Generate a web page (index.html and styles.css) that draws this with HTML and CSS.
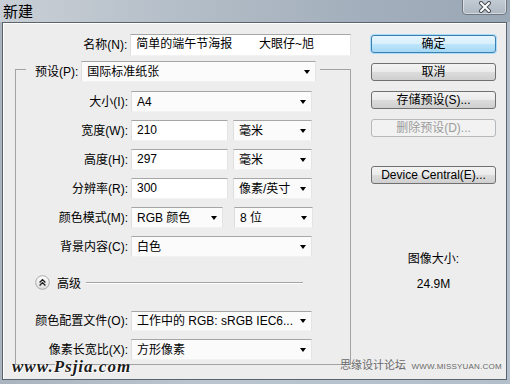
FILE: index.html
```html
<!DOCTYPE html>
<html lang="zh-CN">
<head>
<meta charset="utf-8">
<title>新建</title>
<link rel="stylesheet" href="styles.css">
</head>
<body>
<div class="window">
  <div class="titlebar">
    <span class="title">新建</span>
    <div class="close">
      <svg width="16" height="12" viewBox="0 0 16 12"><path d="M4 2 L12 10 M12 2 L4 10" stroke="#4a4f55" stroke-width="4" stroke-linecap="round"/><path d="M4 2 L12 10 M12 2 L4 10" stroke="#ffffff" stroke-width="2" stroke-linecap="round"/></svg>
    </div>
  </div>
  <div class="frame">
    <div class="form">
      <div class="row name-row">
        <span class="lbl main-lbl">名称(N):</span>
        <div class="field text w-name">简单的端午节海报        大眼仔~旭</div>
      </div>
      <fieldset class="group">
        <legend class="legend">
          <span class="lbl">预设(P):</span>
          <div class="field select w-preset"><span>国际标准纸张</span><i class="arrow"></i></div>
        </legend>
        <div class="row first">
          <span class="lbl grp-lbl">大小(I):</span>
          <div class="field select w-full"><span>A4</span><i class="arrow"></i></div>
        </div>
        <div class="row">
          <span class="lbl grp-lbl">宽度(W):</span>
          <div class="field text w-num">210</div>
          <div class="field select w-unit gap5"><span>毫米</span><i class="arrow"></i></div>
        </div>
        <div class="row">
          <span class="lbl grp-lbl">高度(H):</span>
          <div class="field text w-num">297</div>
          <div class="field select w-unit gap5"><span>毫米</span><i class="arrow"></i></div>
        </div>
        <div class="row">
          <span class="lbl grp-lbl">分辨率(R):</span>
          <div class="field text w-num">300</div>
          <div class="field select w-unit gap5"><span>像素/英寸</span><i class="arrow"></i></div>
        </div>
        <div class="row">
          <span class="lbl grp-lbl">颜色模式(M):</span>
          <div class="field select w-mode"><span>RGB 颜色</span><i class="arrow"></i></div>
          <div class="field select w-unit gap11"><span>8 位</span><i class="arrow"></i></div>
        </div>
        <div class="row">
          <span class="lbl grp-lbl">背景内容(C):</span>
          <div class="field select w-full"><span>白色</span><i class="arrow"></i></div>
        </div>
        <div class="adv-row">
          <svg class="adv-icon" width="15" height="15" viewBox="0 0 15 15">
            <defs><linearGradient id="cg" x1="0" y1="0" x2="0" y2="1"><stop offset="0" stop-color="#ffffff"/><stop offset="1" stop-color="#dcdcdc"/></linearGradient></defs>
            <circle cx="7.5" cy="7.5" r="6.8" fill="url(#cg)" stroke="#a8a8a8"/>
            <path d="M4.6 7.4 L7.5 4.6 L10.4 7.4 M4.6 10.4 L7.5 7.6 L10.4 10.4" fill="none" stroke="#1e1e1e" stroke-width="1.4"/>
          </svg>
          <span class="adv-lbl">高级</span>
          <span class="adv-line"></span>
        </div>
        <div class="row profile">
          <span class="lbl grp-lbl">颜色配置文件(O):</span>
          <div class="field select w-full"><span>工作中的 RGB: sRGB IEC6...</span><i class="arrow"></i></div>
        </div>
        <div class="row">
          <span class="lbl grp-lbl">像素长宽比(X):</span>
          <div class="field select w-full"><span>方形像素</span><i class="arrow"></i></div>
        </div>
      </fieldset>
    </div>
    <div class="side">
      <div class="btn primary">确定</div>
      <div class="btn">取消</div>
      <div class="btn">存储预设(S)...</div>
      <div class="btn disabled">删除预设(D)...</div>
      <div class="btn device">Device Central(E)...</div>
      <div class="size-title">图像大小:</div>
      <div class="size-val">24.9M</div>
    </div>
  </div>
  <div class="wm-left">www.Psjia.com</div>
  <div class="wm-right">思缘设计论坛 <span class="wm-url">WWW.MISSYUAN.COM</span></div>
</div>
</body>
</html>
```
FILE: styles.css
```css
* { box-sizing: border-box; }
html, body { margin: 0; padding: 0; }
body {
  font-family: "Liberation Sans", "Noto Sans CJK SC", sans-serif;
  font-size: 12px;
  color: #000;
  background: #b9c4cf;
}
.window {
  position: relative;
  width: 510px;
  height: 384px;
  overflow: hidden;
  background: linear-gradient(to right, #aab4be, #bac5d0 40%, #b3bfcb);
}
.titlebar {
  height: 22px;
  display: flex;
  align-items: flex-start;
  background: linear-gradient(to right, #c9cfd6 0%, #b4bec8 35%, #a3afbc 70%, #9aa7b5 100%);
}
.title {
  font-family: "Noto Sans CJK SC", sans-serif;
  font-size: 15px;
  line-height: 20px;
  margin: 1px 0 0 3px;
  color: #000;
}
.close {
  margin-left: auto;
  margin-right: 3px;
  margin-top: -2px;
  width: 45px;
  height: 17px;
  border: 1px solid #6f7882;
  border-radius: 0 0 4px 4px;
  background: linear-gradient(#c4ccd4, #aeb8c3);
  box-shadow: inset 0 0 0 1px rgba(255,255,255,0.45);
  display: flex;
  justify-content: center;
  align-items: center;
  padding-top: 1px;
}
.frame {
  margin: 0 3px 0 2px;
  height: 358px;
  border: 1px solid #5b636b;
  background: #ededed;
  box-shadow: inset 1px 1px 0 #ffffff;
  display: flex;
}
.form { width: 348px; }
.row {
  display: flex;
  align-items: center;
  height: 21px;
  margin-top: 8px;
}
.row.first { margin-top: 9px; }
.name-row { margin-top: 11px; height: 22px; }
.lbl {
  white-space: nowrap;
  line-height: 16px;
}
.main-lbl { width: 125px; text-align: right; }
.grp-lbl { width: 112px; text-align: right; }
.field {
  height: 100%;
  margin-left: 3px;
  background: #ffffff;
  border: 1px solid;
  border-color: #a6a6a6 #e4e4e4 #f2f2f2 #dedede;
  line-height: 18px;
  padding: 0 5px;
  white-space: pre;
  overflow: hidden;
}
.select {
  display: flex;
  align-items: center;
  justify-content: space-between;
  background: #fbfbfb;
}
.arrow {
  width: 0;
  height: 0;
  border-left: 3.5px solid transparent;
  border-right: 3.5px solid transparent;
  border-top: 4px solid #000;
  flex: none;
}
.w-name { width: 222px; }
.w-preset { width: 235px; height: 21px; }
.w-full { width: 181px; }
.w-num { width: 97px; }
.w-unit { width: 79px; }
.w-mode { width: 92px; }
.gap5 { margin-left: 5px; }
.gap11 { margin-left: 11px; }
.group {
  margin: 1px 0 0 12px;
  width: 336px;
  padding: 0 0 4px 0;
  border: 1px solid #a3a3a3;
  min-inline-size: 0;
}
.legend {
  margin-left: 10px;
  padding: 4px 4px 0 9px;
  display: flex;
  align-items: center;
  height: 25px;
}
.adv-row {
  display: flex;
  align-items: center;
  height: 15px;
  margin-top: 18px;
}
.adv-icon { margin-left: 19px; flex: none; }
.adv-lbl {
  margin-left: 7px;
  font-family: "Noto Sans CJK SC", sans-serif;
  line-height: 15px;
}
.adv-line {
  flex: 1;
  margin: 0 47px 0 5px;
  height: 2px;
  border-top: 1px solid #a3a3a3;
  border-bottom: 1px solid #ffffff;
}
.row.profile { margin-top: 21px; height: 20px; }
.side {
  margin-left: 20px;
  padding-top: 12px;
  width: 125px;
  display: flex;
  flex-direction: column;
  align-items: stretch;
}
.btn {
  height: 18px;
  margin-bottom: 10px;
  border: 1px solid #707070;
  border-radius: 3px;
  background: linear-gradient(#f3f3f3, #ebebeb 48%, #dcdcdc 52%, #cfcfcf);
  text-align: center;
  line-height: 16px;
  white-space: nowrap;
}
.btn.primary {
  border-color: #3c7fb1;
  background: linear-gradient(#e6f5fd, #d8effc 48%, #bde5fc 52%, #a6d8f4);
  box-shadow: 0 0 0 1px #a9dcf6;
}
.btn.disabled {
  color: #9c9c9c;
  border-color: #b5b9bc;
  background: #f2f2f2;
}
.btn.device { margin-top: 19px; }
.size-title {
  margin-top: 57px;
  text-align: center;
  line-height: 16px;
}
.size-val {
  margin-top: 9px;
  text-align: center;
  line-height: 16px;
}
.wm-left {
  position: absolute;
  left: 12px;
  top: 357px;
  font-family: "Liberation Serif", serif;
  font-weight: bold;
  font-style: italic;
  font-size: 17px;
  letter-spacing: 1px;
  color: #1c1c1c;
  text-shadow: 1px 1px 0 #ffffff, -1px 0 0 #ffffff;
  white-space: nowrap;
}
.wm-right {
  position: absolute;
  left: 340px;
  top: 356px;
  font-family: "Noto Sans CJK SC", sans-serif;
  font-size: 11px;
  line-height: 16px;
  color: #6a6a6a;
  white-space: nowrap;
}
.wm-url {
  font-family: "Liberation Sans", sans-serif;
  font-size: 8px;
  margin-left: 3px;
  letter-spacing: 0.2px;
}
```
